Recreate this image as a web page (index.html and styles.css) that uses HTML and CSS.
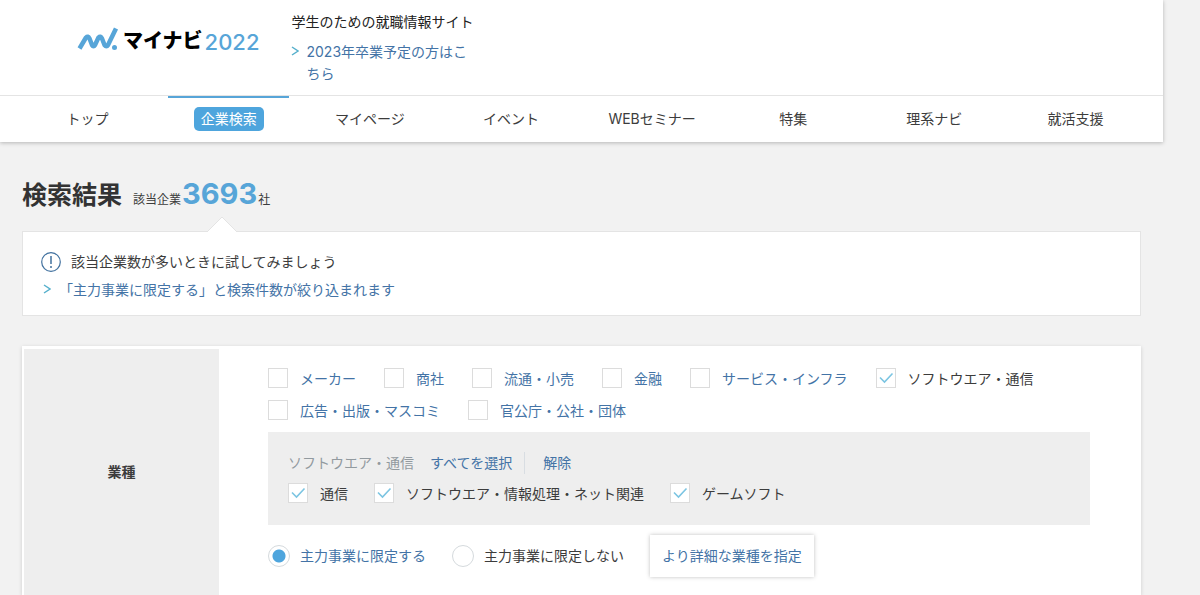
FILE: index.html
```html
<!DOCTYPE html>
<html lang="ja">
<head>
<meta charset="utf-8">
<title>検索結果 | マイナビ2022</title>
<link rel="stylesheet" href="styles.css">
</head>
<body>
<header class="header">
  <div class="header-top">
    <a class="logo" href="#">
      <svg class="logo-mark" viewBox="0 0 42 24" aria-hidden="true">
        <path d="M2.500 21.500L9 10.500Q11 8.500 12.500 11.500L15 18Q16.500 20.500 18 18L21.500 10.500Q23.500 8.500 25 11.500L27.500 18Q29.500 20.500 31 18L39 1.500" fill="none" stroke="#57a5d8" stroke-width="4.500" stroke-linejoin="round"/>
        <circle cx="37.500" cy="20.500" r="2.500" fill="#57a5d8"/>
      </svg>
      <span class="logo-name">マイナビ</span>
      <span class="logo-year">2022</span>
    </a>
    <div class="about">
      <p class="about-text">学生のための就職情報サイト</p>
      <a class="arrow-link about-link" href="#">
        <svg class="chevron" viewBox="0 0 8 10" aria-hidden="true"><path d="M1 1L7 5L1 9"/></svg>
        <span>2023年卒業予定の方はこちら</span>
      </a>
    </div>
  </div>
  <nav class="nav">
    <a class="nav-item" href="#"><span>トップ</span></a>
    <a class="nav-item is-active" href="#"><span>企業検索</span></a>
    <a class="nav-item" href="#"><span>マイページ</span></a>
    <a class="nav-item" href="#"><span>イベント</span></a>
    <a class="nav-item" href="#"><span>WEBセミナー</span></a>
    <a class="nav-item" href="#"><span>特集</span></a>
    <a class="nav-item" href="#"><span>理系ナビ</span></a>
    <a class="nav-item" href="#"><span>就活支援</span></a>
  </nav>
</header>

<main class="main">
  <div class="heading">
    <h1 class="title">検索結果</h1>
    <p class="count">該当企業<strong class="count-number">3693</strong>社</p>
  </div>

  <section class="hint">
    <svg class="hint-tip" viewBox="0 0 32 16" aria-hidden="true"><path d="M1 16L16 1L31 16" fill="#fff" stroke="#e4e4e4"/></svg>
    <p class="hint-text">
      <svg class="hint-icon" viewBox="0 0 20 20" aria-hidden="true"><circle cx="10" cy="10" r="9.300" fill="none" stroke="#41719f" stroke-width="1.200"/><path d="M10 4V12M10 14V16" stroke="#41719f" stroke-width="1.500"/></svg>
      該当企業数が多いときに試してみましょう
    </p>
    <a class="arrow-link hint-link" href="#">
      <svg class="chevron" viewBox="0 0 8 10" aria-hidden="true"><path d="M1 1L7 5L1 9"/></svg>
      <span>「主力事業に限定する」と検索件数が絞り込まれます</span>
    </a>
  </section>

  <form class="filter">
    <h2 class="filter-name">業種</h2>
    <div class="filter-body">
      <div class="options">
        <label class="option"><input class="check" type="checkbox"><span>メーカー</span></label>
        <label class="option"><input class="check" type="checkbox"><span>商社</span></label>
        <label class="option"><input class="check" type="checkbox"><span>流通・小売</span></label>
        <label class="option"><input class="check" type="checkbox"><span>金融</span></label>
        <label class="option"><input class="check" type="checkbox"><span>サービス・インフラ</span></label>
        <label class="option is-plain"><input class="check" type="checkbox" checked><span>ソフトウエア・通信</span></label>
        <label class="option"><input class="check" type="checkbox"><span>広告・出版・マスコミ</span></label>
        <label class="option"><input class="check" type="checkbox"><span>官公庁・公社・団体</span></label>
      </div>
      <div class="panel">
        <div class="panel-head">
          <span class="panel-name">ソフトウエア・通信</span>
          <button class="text-button" type="button">すべてを選択</button>
          <button class="text-button is-divided" type="button">解除</button>
        </div>
        <div class="options">
          <label class="option is-plain"><input class="check" type="checkbox" checked><span>通信</span></label>
          <label class="option is-plain"><input class="check" type="checkbox" checked><span>ソフトウエア・情報処理・ネット関連</span></label>
          <label class="option is-plain"><input class="check" type="checkbox" checked><span>ゲームソフト</span></label>
        </div>
      </div>
      <div class="limits">
        <label class="limit"><input class="radio" type="radio" name="limit" checked><span>主力事業に限定する</span></label>
        <label class="limit is-plain"><input class="radio" type="radio" name="limit"><span>主力事業に限定しない</span></label>
        <button class="detail-button" type="button">より詳細な業種を指定</button>
      </div>
    </div>
  </form>
</main>
</body>
</html>
```

FILE: styles.css
```css
* {
  box-sizing: border-box;
}

body {
  margin: 0;
  background: #f2f2f2;
  color: #3c3c3c;
  font-family: Inter, "Noto Sans CJK JP", sans-serif;
  font-size: 14px;
  line-height: 22px;
}

h1, h2, p {
  margin: 0;
}

a {
  color: #4373a6;
  text-decoration: none;
}

button {
  font: inherit;
  color: #4373a6;
  cursor: pointer;
}

.header {
  margin-right: 37px;
  background: #fff;
  box-shadow: 0 1px 4px rgba(0, 0, 0, 0.25);
}

.header-top {
  display: flex;
  align-items: flex-start;
  gap: 32px;
  padding: 11px 0 10px 77px;
  border-bottom: 1px solid #e4e4e4;
}

.logo {
  display: flex;
  align-items: flex-end;
  margin-top: 16px;
}

.logo-mark {
  width: 42px;
  height: 24px;
  margin-right: 4px;
}

.logo-name {
  color: #000;
  font-size: 20px;
  font-weight: 900;
  line-height: 20px;
}

.logo-year {
  color: #57a5d8;
  font-size: 22px;
  font-weight: 500;
  line-height: 18px;
  margin-left: 2px;
}

.about {
  width: 182px;
}

.about-text {
  color: #222;
  margin-bottom: 8px;
}

.arrow-link {
  display: flex;
  align-items: flex-start;
}

.chevron {
  flex: none;
  width: 8px;
  height: 10px;
  margin-top: 5px;
  fill: none;
  stroke: #56b0cc;
  stroke-width: 1.5;
}

.about-link {
  gap: 7px;
  padding-right: 3px;
}

.nav {
  display: grid;
  grid-template-columns: repeat(8, 1fr);
  padding: 0 17px;
}

.nav-item {
  margin: 0 10px;
  padding: 9px 0 11px;
  border-top: 2px solid transparent;
  color: #3c3c3c;
  text-align: center;
  white-space: nowrap;
}

.nav-item span {
  display: inline-block;
  padding: 1px 7px;
  border-radius: 5px;
}

.is-active {
  border-color: #57a5d8;
}

.is-active span {
  background: #4ea5dd;
  color: #fff;
}

.main {
  margin: 0 59px 0 22px;
}

.heading {
  display: flex;
  align-items: baseline;
  gap: 11px;
  padding: 32px 0 16px;
}

.title {
  font-size: 25px;
  line-height: 40px;
  color: #333;
}

.count {
  font-size: 12px;
}

.count-number {
  margin: 0 1px;
  color: #57a5d8;
  font-size: 29px;
  line-height: 40px;
}

.hint {
  position: relative;
  padding: 19px 18px 14px;
  border: 1px solid #e4e4e4;
  background: #fff;
}

.hint-tip {
  position: absolute;
  left: 183px;
  top: -16px;
  width: 32px;
  height: 16px;
}

.hint-text {
  display: flex;
  align-items: center;
  gap: 10px;
}

.hint-icon {
  width: 20px;
  height: 20px;
}

.hint-link {
  gap: 8px;
  margin-top: 6px;
  padding-left: 2px;
}

.filter {
  display: grid;
  grid-template-columns: 195px 1fr;
  margin-top: 30px;
  padding: 3px 2px 0;
  background: #fff;
  box-shadow: 0 1px 4px rgba(0, 0, 0, 0.15);
}

.filter-name {
  display: grid;
  place-items: center;
  background: #eee;
  font-size: 14px;
}

.filter-body {
  padding: 18px 49px 18px;
}

.options {
  display: flex;
  flex-wrap: wrap;
  gap: 10px 28px;
}

.option,
.limit {
  display: flex;
  align-items: center;
  color: #4373a6;
  white-space: nowrap;
}

.option {
  gap: 12px;
}

.option span {
  padding-top: 2px;
  line-height: 20px;
}

.is-plain {
  color: #3c3c3c;
}

.check,
.radio {
  appearance: none;
  flex: none;
  margin: 0;
  border: 1px solid #dcdcdc;
  background: #fff center / 18px 18px no-repeat;
}

.check {
  width: 20px;
  height: 20px;
}

.check:checked {
  background-image: url("data:image/svg+xml,%3Csvg xmlns='http://www.w3.org/2000/svg' viewBox='0 0 18 18'%3E%3Cpath d='M3 8.500L7.500 13L15.500 4.500' fill='none' stroke='%237cc5e2' stroke-width='1.600'/%3E%3C/svg%3E");
}

.panel {
  margin-top: 11px;
  padding: 20px 20px 21px;
  background: #eee;
}

.panel-head {
  display: flex;
  gap: 16px;
  margin-bottom: 8px;
}

.panel-name {
  color: #929a9f;
}

.text-button {
  padding: 0;
  border: 0;
  background: none;
}

.is-divided {
  margin-left: -4px;
  padding-left: 18px;
  border-left: 1px solid #d8dde2;
}

.panel .options {
  column-gap: 26px;
}

.limits {
  display: flex;
  align-items: center;
  gap: 26px;
  margin-top: 10px;
}

.limit {
  gap: 10px;
}

.radio {
  width: 22px;
  height: 22px;
  border-radius: 50%;
  border-color: #d5dadd;
}

.radio:checked {
  background-image: radial-gradient(circle, #4ea5dd 6px, transparent 7px);
}

.detail-button {
  padding: 10px 12px;
  border: 0;
  background: #fff;
  box-shadow: 0 0 4px rgba(0, 0, 0, 0.25);
}
```
